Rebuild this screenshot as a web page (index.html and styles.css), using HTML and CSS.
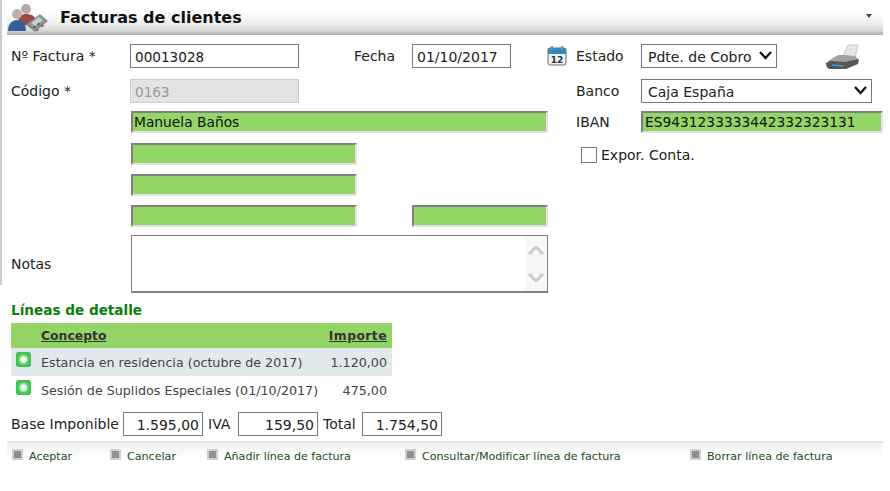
FILE: index.html
```html
<!DOCTYPE html>
<html lang="es">
<head>
    <meta charset="UTF-8">
    <title>Facturas de clientes</title>
    <link rel="stylesheet" href="styles.css">
</head>
<body>
<div class="page">
    <div class="title-bar">
        <svg class="title-icon" width="40" height="32" viewBox="0 0 40 32">
            <circle cx="18" cy="7" r="5" fill="#b4aaa4"/>
            <path d="M10 22c0-8 3-10 8-10s9 2 10 6l-6 6z" fill="#9c4a46"/>
            <circle cx="9" cy="12" r="5" fill="#bdb2aa"/>
            <path d="M0 29c0-7 4-11 9-11s9 4 9 11z" fill="#34609a"/>
            <path d="M18 23l14-11 8 7-13 11z" fill="#8d9290"/>
            <path d="M23 21l8-6 4 3-8 6z" fill="#c6d0cc"/>
            <path d="M25 25l2-1 1 1-2 1zM29 22l2-1 1 1-2 1zM28 28l2-1 1 1-2 1zM33 24l2-1 1 1-2 1z" fill="#444"/>
        </svg>
        <span class="title-text">Facturas de clientes</span>
        <span class="title-arrow"></span>
    </div>

    <div class="form-top">
        <div class="col-left">
            <div class="row row-first">
                <label class="lbl">Nº Factura *</label>
                <div class="box box-num">00013028</div>
                <label class="lbl-fecha">Fecha</label>
                <div class="box box-date">01/10/2017</div>
                <svg class="cal-icon" width="20" height="20" viewBox="0 0 20 20">
                    <rect x="1" y="2" width="18" height="17" rx="2" fill="#eef1f3" stroke="#5b6b78"/>
                    <rect x="1" y="2" width="18" height="6" fill="#3489bd"/>
                    <rect x="4" y="0" width="2" height="4" fill="#888"/>
                    <rect x="14" y="0" width="2" height="4" fill="#888"/>
                    <text x="10" y="17" text-anchor="middle" class="cal-num">12</text>
                </svg>
            </div>
            <div class="row row-code">
                <label class="lbl">Código *</label>
                <div class="box box-num box-off">0163</div>
            </div>
            <div class="row row-name">
                <span class="lbl"></span>
                <div class="green green-wide">Manuela Baños</div>
            </div>
            <div class="row row-green">
                <span class="lbl"></span>
                <div class="green green-mid"></div>
            </div>
            <div class="row row-green">
                <span class="lbl"></span>
                <div class="green green-mid"></div>
            </div>
            <div class="row row-green">
                <span class="lbl"></span>
                <div class="green green-mid"></div>
                <div class="green green-small"></div>
            </div>
            <div class="row row-notes">
                <label class="lbl">Notas</label>
                <div class="notes">
                    <div class="notes-bar">
                        <svg width="18" height="14" viewBox="0 0 18 14"><path d="M2 11l7-7 7 7" fill="none" stroke="#ccc" stroke-width="3"/></svg>
                        <svg width="18" height="14" viewBox="0 0 18 14"><path d="M2 3l7 7 7-7" fill="none" stroke="#ccc" stroke-width="3"/></svg>
                    </div>
                </div>
            </div>
        </div>

        <div class="col-right">
            <div class="row row-first">
                <label class="lbl-r">Estado</label>
                <div class="sel sel-estado">Pdte. de Cobro
                    <svg class="chev" width="13" height="9" viewBox="0 0 13 9"><path d="M1 1l5.500 6 5.500-6" fill="none" stroke="#111" stroke-width="2.300"/></svg>
                </div>
                <svg class="printer" width="36" height="26" viewBox="0 0 36 26">
                    <path d="M18 12L23 1h10l-3 13z" fill="#e6e6e6" stroke="#aaa" stroke-width=".6"/>
                    <path d="M3 17l10-6h6l11 1 4 4-4 3H6z" fill="#a2a2a2"/>
                    <path d="M1 19l4-2 15 1 14-3-1 5-12 5H6c-3 0-5-2-5-6z" fill="#555"/>
                    <path d="M7 21l11 1" stroke="#3aa0d8" stroke-width="1.500"/>
                </svg>
            </div>
            <div class="row row-code">
                <label class="lbl-r">Banco</label>
                <div class="sel sel-banco">Caja España
                    <svg class="chev" width="13" height="9" viewBox="0 0 13 9"><path d="M1 1l5.500 6 5.500-6" fill="none" stroke="#111" stroke-width="2.300"/></svg>
                </div>
            </div>
            <div class="row row-name">
                <label class="lbl-r">IBAN</label>
                <div class="green green-iban">ES9431233333442332323131</div>
            </div>
            <div class="check-row">
                <span class="check"></span>
                <span>Expor. Conta.</span>
            </div>
        </div>
    </div>

    <div class="detail">
        <div class="detail-title">Líneas de detalle</div>
        <div class="lines">
            <div class="line line-head">
                <span class="line-dot"></span>
                <span class="line-concept">Concepto</span>
                <span class="line-amount">Importe</span>
            </div>
            <div class="line line-odd">
                <span class="line-dot"><span class="bullet"></span></span>
                <span class="line-concept">Estancia en residencia (octubre de 2017)</span>
                <span class="line-amount">1.120,00</span>
            </div>
            <div class="line">
                <span class="line-dot"><span class="bullet"></span></span>
                <span class="line-concept">Sesión de Suplidos Especiales (01/10/2017)</span>
                <span class="line-amount">475,00</span>
            </div>
        </div>
        <div class="totals">
            <span class="tot-base">Base Imponible</span><div class="box-total">1.595,00</div>
            <span class="tot-iva">IVA</span><div class="box-total">159,50</div>
            <span class="tot-total">Total</span><div class="box-total">1.754,50</div>
        </div>
    </div>

    <div class="actions">
        <a class="action act-1"><span class="act-mark"></span>Aceptar</a>
        <a class="action act-2"><span class="act-mark"></span>Cancelar</a>
        <a class="action act-3"><span class="act-mark"></span>Añadir línea de factura</a>
        <a class="action act-4"><span class="act-mark"></span>Consultar/Modificar línea de factura</a>
        <a class="action"><span class="act-mark"></span>Borrar línea de factura</a>
    </div>
</div>
</body>
</html>
```

FILE: styles.css
```css
html, body {
    margin: 0;
    background-color: #fff;
}
body {
    font-family: "DejaVu Sans", Verdana, sans-serif;
    font-size: 14px;
    color: #222;
    overflow: hidden;
}
.page {
    width: 890px;
    height: 491px;
    position: relative;
}
.page::before {
    content: "";
    position: absolute;
    left: 0;
    top: 0;
    width: 2px;
    height: 285px;
    background-color: #ccc;
}

.title-bar {
    height: 35px;
    width: 876px;
    margin-left: 7px;
    display: flex;
    align-items: center;
    box-sizing: border-box;
    background: linear-gradient(to bottom, #fff 0, #fff 35%, #eee 65%, #d8d8d8 88%, #aaa 100%);
    position: relative;
}
.title-icon {
    margin-left: 1px;
    margin-top: 1px;
}
.title-text {
    margin-left: 12px;
    font-size: 16px;
    font-weight: bold;
    color: #111;
}
.title-arrow {
    position: absolute;
    right: 11px;
    top: 14px;
    border-top: 4px solid #444;
    border-left: 3px solid transparent;
    border-right: 3px solid transparent;
}

.form-top {
    display: flex;
    padding-left: 11px;
    padding-top: 9px;
}
.col-left {
    width: 565px;
}
.row {
    display: flex;
    align-items: center;
}
.row-first {
    height: 24px;
    margin-bottom: 11px;
}
.row-code {
    height: 24px;
    margin-bottom: 8px;
}
.row-name {
    height: 22px;
    margin-bottom: 10px;
}
.row-green {
    height: 22px;
    margin-bottom: 9px;
}
.row-notes {
    height: 58px;
    margin-top: -1px;
}
.lbl {
    width: 120px;
    flex-shrink: 0;
}
.lbl-fecha {
    margin-left: 55px;
    width: 58px;
}
.lbl-r {
    width: 65px;
    flex-shrink: 0;
}

.box {
    box-sizing: border-box;
    height: 24px;
    border: 1px solid #777;
    padding-left: 4px;
    line-height: 24px;
    background-color: #fff;
}
.box-num {
    width: 169px;
    margin-left: -1px;
    font-size: 13.6px;
}
.box-off {
    background-color: #e3e3e3;
    border-color: #ccc;
    color: #999;
}
.box-date {
    width: 99px;
}
.cal-icon {
    margin-left: 36px;
}
.cal-num {
    font-size: 9px;
    font-weight: bold;
    fill: #333;
}

.green {
    box-sizing: border-box;
    height: 22px;
    background-color: #93d667;
    border-style: solid;
    border-width: 2px;
    border-color: #808080 #e3e3e3 #e3e3e3 #808080;
    color: #111;
    line-height: 18px;
    font-size: 13.8px;
    padding-left: 1px;
}
.green-wide {
    width: 417px;
}
.green-mid {
    width: 226px;
}
.green-small {
    width: 136px;
    margin-left: 55px;
}
.green-iban {
    width: 242px;
    padding-left: 2px;
}

.notes {
    box-sizing: border-box;
    width: 417px;
    height: 58px;
    border: 1px solid #808080;
    border-bottom-width: 2px;
    display: flex;
    justify-content: flex-end;
}
.notes-bar {
    width: 22px;
    background-color: #f8f8f8;
    display: flex;
    flex-direction: column;
    justify-content: space-between;
    align-items: center;
    padding: 7px 0 6px;
    box-sizing: border-box;
}

.sel {
    box-sizing: border-box;
    height: 24px;
    border: 1px solid #777;
    padding-left: 6px;
    line-height: 25px;
    position: relative;
}
.sel-estado {
    width: 136px;
}
.sel-banco {
    width: 231px;
}
.chev {
    position: absolute;
    right: 4px;
    top: 6px;
}
.printer {
    margin-left: 48px;
    margin-top: 1px;
}
.check-row {
    display: flex;
    align-items: center;
    margin-left: 5px;
    margin-top: 14px;
}
.check {
    box-sizing: border-box;
    width: 16px;
    height: 16px;
    border: 1px solid #777;
    margin-right: 4px;
}

.detail {
    padding-left: 11px;
    margin-top: 9px;
}
.detail-title {
    font-size: 13.6px;
    font-weight: bold;
    color: #0a7f0a;
    height: 21px;
}
.lines {
    width: 381px;
    font-size: 12.7px;
}
.line {
    display: flex;
    align-items: center;
    height: 28px;
}
.line-head {
    height: 25px;
    background-color: #93d667;
    font-weight: bold;
    font-size: 12.4px;
    text-decoration: underline;
    color: #333;
}
.line-odd {
    background-color: #e2e9eb;
}
.line-dot {
    width: 30px;
    flex-shrink: 0;
    display: flex;
    padding-left: 5px;
    box-sizing: border-box;
    margin-top: -5px;
}
.bullet {
    width: 15px;
    height: 15px;
    border-radius: 3px;
    background: radial-gradient(circle at 50% 50%, #fff 0, #eefbee 22%, #4cc95a 50%, #35b444 100%);
}
.line-concept {
    flex: 1;
    color: #444;
}
.line-head .line-concept {
    color: #333;
}
.line-amount {
    padding-right: 5px;
    color: #444;
}
.line-head .line-amount {
    color: #333;
    letter-spacing: .4px;
}

.totals {
    display: flex;
    align-items: center;
    gap: 5px;
    margin-top: 8px;
}
.tot-base {
    width: 107px;
    white-space: nowrap;
}
.tot-iva {
    width: 25px;
}
.tot-total {
    width: 34px;
}
.box-total {
    box-sizing: border-box;
    width: 80px;
    height: 24px;
    border: 1px solid #777;
    text-align: right;
    padding-right: 3px;
    line-height: 24px;
}

.actions {
    box-sizing: border-box;
    display: flex;
    width: 876px;
    margin-left: 7px;
    margin-top: 5px;
    padding-left: 5px;
    height: 28px;
    border-top: 2px solid #e4e4e4;
    background: linear-gradient(to bottom, #f2f2f2 0, #fff 60%);
    font-size: 11.1px;
    line-height: 16px;
    color: #1c4a1c;
    padding-top: 6px;
}
.action {
    display: flex;
    white-space: nowrap;
}
.act-mark {
    box-sizing: border-box;
    width: 11px;
    height: 11px;
    background-color: #8f8f8f;
    border: 2px solid #cfcfcf;
    margin-right: 6px;
}
.act-1 { width: 98px; }
.act-2 { width: 97px; }
.act-3 { width: 198px; }
.act-4 { width: 285px; }
```
